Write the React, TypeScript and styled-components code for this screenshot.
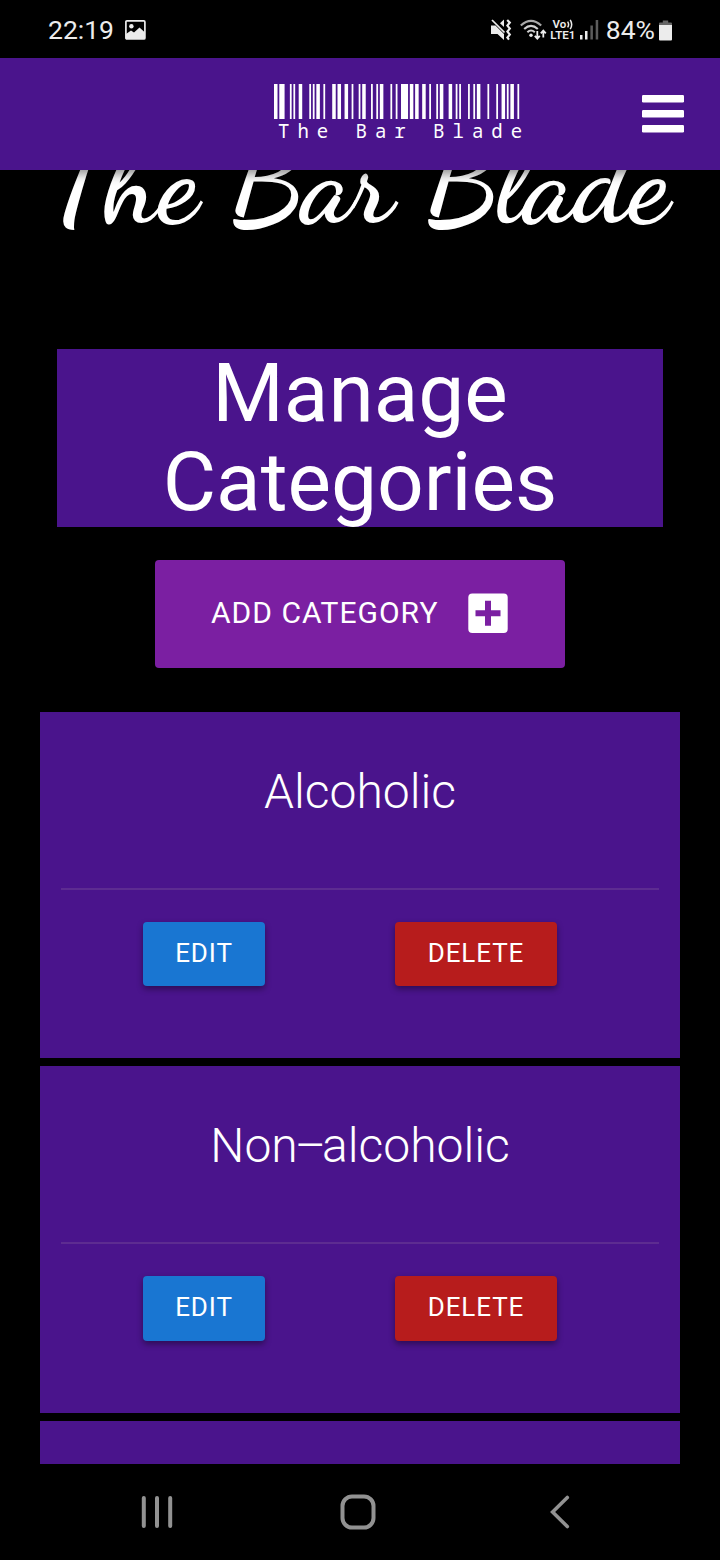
import React from 'react';
import styled, { createGlobalStyle } from 'styled-components';

const GlobalStyle = createGlobalStyle`
  *, *::before, *::after { box-sizing: border-box; }
  body { margin: 0; background: #000; font-family: Roboto, "Liberation Sans", sans-serif; }
  button { font-family: inherit; cursor: pointer; }
`;

const Screen = styled.div`
  width: 720px;
  height: 1560px;
  display: flex;
  flex-direction: column;
  overflow: hidden;
  background: #000;
  color: #fff;
`;

const StatusBar = styled.div`
  flex: none;
  height: 58px;
  padding: 2px 48px 0 48px;
  display: flex;
  align-items: center;
  justify-content: space-between;
  color: #ececec;
`;

const StatusGroup = styled.div<{ $gap: number }>`
  display: flex;
  align-items: center;
  gap: ${(p) => p.$gap}px;
  svg { display: block; flex: none; }
`;

const StatusText = styled.span`
  font-size: 26.5px;
  line-height: 32px;
`;

const LteLabel = styled.div`
  display: flex;
  flex-direction: column;
  align-items: center;
  width: 26px;
  margin-right: 1px;
  font-size: 11.5px;
  line-height: 11px;
  font-weight: 600;
  white-space: nowrap;
`;

const AppBar = styled.header`
  flex: none;
  position: relative;
  z-index: 1;
  height: 112px;
  padding: 0 36px 0 274px;
  display: flex;
  align-items: center;
  justify-content: space-between;
  background: #4a148c;
  box-shadow: 0 4px 10px rgba(0, 0, 0, 0.45);
`;

const Logo = styled.div`
  width: 253px;
  display: flex;
  flex-direction: column;
  padding-bottom: 2px;
  svg { display: block; }
`;

const LogoText = styled.div`
  display: grid;
  grid-template-columns: repeat(13, 19.4px);
  margin-top: 1px;
  font-family: "Noto Sans Mono", "Roboto Mono", "DejaVu Sans Mono", monospace;
  font-size: 19px;
  line-height: 22px;
  text-align: center;
`;

const MenuButton = styled.button`
  padding: 0;
  border: 0;
  background: none;
  svg { display: block; }
`;

const Page = styled.main`
  flex: 1;
  min-height: 0;
  overflow: hidden;
  display: flex;
  flex-direction: column;
  align-items: center;
`;

const Brand = styled.h1`
  flex: none;
  height: 179px;
  margin: 0 3px 0 0;
  font: 700 113px/100px "Dancing Script", "Liberation Serif", serif;
  word-spacing: 1px;
  white-space: nowrap;
`;

const BrandText = styled.span`
  display: block;
  margin-top: -36px;
`;

const PageTitle = styled.h2`
  flex: none;
  width: 606px;
  height: 178px;
  margin: 0 0 33px;
  padding: 0 90px;
  background: #4a148c;
  font-size: 82px;
  font-weight: 400;
  line-height: 89px;
  text-align: center;
`;

const AddButton = styled.button`
  flex: none;
  width: 410px;
  height: 108px;
  margin-bottom: 43.9px;
  padding: 0 57px 2px 56px;
  border: 0;
  border-radius: 4px;
  display: flex;
  align-items: center;
  justify-content: space-between;
  background: #7b1fa2;
  color: #fff;
  font-size: 30px;
  letter-spacing: 1px;
  white-space: nowrap;
  svg { display: block; }
`;

const AddLabel = styled.span`
  padding-bottom: 2px;
`;

const CardList = styled.div`
  width: 640px;
  display: flex;
  flex-direction: column;
  gap: 8px;
`;

const Card = styled.section`
  flex: none;
  height: 346.5px;
  padding: 0 21px;
  background: #4a148c;
`;

const CardTitle = styled.h3`
  height: 176px;
  margin: 0;
  padding-top: 48px;
  font-size: 48px;
  font-weight: 300;
  line-height: 64px;
  text-align: center;
`;

const Dash = styled.span`
  margin: 0 -4px 0 -3px;
`;

const Divider = styled.hr`
  height: 2px;
  margin: 0;
  border: 0;
  background: #5d2c91;
`;

const Actions = styled.div`
  display: flex;
  gap: 130px;
  padding: 32px 0 0 82px;
`;

const ActionButton = styled.button<{ $tone: 'primary' | 'danger' }>`
  width: ${(p) => (p.$tone === 'danger' ? 162 : 122)}px;
  height: 64.2px;
  padding: 0 0 2px;
  border: 0;
  border-radius: 4px;
  background: ${(p) => (p.$tone === 'danger' ? '#b71c1c' : '#1976d2')};
  color: #fff;
  font-size: 26px;
  letter-spacing: 0.9px;
  box-shadow: 0 3px 6px rgba(0, 0, 0, 0.4);
`;

const NavBar = styled.nav`
  flex: none;
  height: 96px;
  padding: 0 149px 0 141px;
  display: grid;
  grid-template-columns: 199px 210px 21px;
  align-items: center;
  background: #000;
  svg { display: block; }
`;

const NAME = 'The Bar Blade';

// Code 128 element widths (bar, space, bar, ...) per character
const CODE128: Record<string, string> = {
  ' ': '212222',
  B: '131123',
  T: '213311',
  a: '121124',
  d: '141221',
  e: '112214',
  h: '122411',
  l: '221114',
  r: '121241',
};

function barcode(text: string) {
  const bars: { x: number; w: number }[] = [];
  let x = 0;
  for (const ch of text) {
    [...CODE128[ch]].forEach((n, i) => {
      if (i % 2 === 0) bars.push({ x, w: Number(n) });
      x += Number(n);
    });
  }
  return bars;
}

const Barcode = () => (
  <svg width="252.25" height="35" viewBox="0 0 143 35" preserveAspectRatio="none" fill="#fff">
    {barcode(NAME).map((b) => (
      <rect key={b.x} x={b.x} y="0" width={b.w} height="35" />
    ))}
  </svg>
);

const PictureIcon = () => (
  <svg width="21" height="20" viewBox="0 0 21 20">
    <rect x="0.9" y="0.9" width="19" height="18" rx="1" fill="none" stroke="#ececec" strokeWidth="1.7" />
    <circle cx="6.4" cy="6.2" r="2.2" fill="#ececec" />
    <path d="M1 14l5-3.6 3 2.2 5.5-5 5.5 5V19H1z" fill="#ececec" />
  </svg>
);

const MuteIcon = () => (
  <svg width="21" height="22" viewBox="0 0 21 22" fill="none">
    <path d="M0 6.5h4.5L13 15v6L6.5 15H0z" fill="#ececec" />
    <path d="M9 4.2L13 .5v7.6z" fill="#ececec" />
    <path d="M1 1l12.5 12.5" stroke="#ececec" strokeWidth="1.7" />
    <path d="M16.2 1l2.6 2.6-2.4 3 2.4 3-2.4 3 2.4 3-2.4 3 1.6 2" stroke="#ececec" strokeWidth="2.2" />
  </svg>
);

const WifiIcon = () => (
  <svg width="27" height="22" viewBox="0 0 27 22" fill="none" stroke="#a8a8a8" strokeWidth="2.1">
    <path d="M.8 6.6Q11 -2.8 21.2 6.6" />
    <path d="M4.2 10Q11 3.8 17.8 10" stroke="#d0d0d0" />
    <path d="M7.4 13.2Q11 9.8 14.8 13.2" stroke="#d0d0d0" />
    <circle cx="11" cy="16.2" r="1.7" fill="#ececec" stroke="none" />
    <path d="M17.3 12v7M14.8 16.8l2.5 2.8 2.5-2.8M23.3 18.5v-6M20.8 14.3l2.5-2.8 2.5 2.8" stroke="#ececec" strokeWidth="1.8" />
  </svg>
);

const SignalIcon = () => (
  <svg width="19" height="20" viewBox="0 0 19 20">
    <rect x="0" y="15" width="2.5" height="4.5" fill="#ececec" />
    <rect x="5" y="11" width="2.5" height="8.5" fill="#ececec" />
    <rect x="10.4" y="5.5" width="2.5" height="14" fill="#5c5c5c" />
    <rect x="15.7" y="0" width="2.5" height="19.5" fill="#5c5c5c" />
  </svg>
);

const BatteryIcon = () => (
  <svg width="13" height="21" viewBox="0 0 13 21">
    <path d="M0 5V3.4q0-1 1-1h2.8V.5h5.4v1.9H12q1 0 1 1V5z" fill="#666" />
    <path d="M0 5h13v14.5q0 1-1 1H1q-1 0-1-1z" fill="#ececec" />
  </svg>
);

const VolteWaves = () => (
  <svg width="6" height="11" viewBox="0 0 6 11" fill="none" stroke="#ececec" strokeWidth="1.5">
    <path d="M.6 2.6q2 2.9 0 5.8M3.2 .8q3 4.7 0 9.4" />
  </svg>
);

const BarsIcon = () => (
  <svg width="42" height="38" viewBox="0 0 42 38" fill="#fff">
    <rect y="0" width="42" height="7.5" rx="1.3" />
    <rect y="15" width="42" height="7.5" rx="1.3" />
    <rect y="30" width="42" height="7.5" rx="1.3" />
  </svg>
);

const PlusSquareIcon = () => (
  <svg width="40" height="40" viewBox="0 0 40 40">
    <rect x="0.3" y="0.5" width="39.4" height="39.4" rx="4" fill="#fff" />
    <path d="M17 7.7h6v9.5h9.5v6H23v9.5h-6v-9.5H7.5v-6H17z" fill="#7b1fa2" />
  </svg>
);

const RecentsIcon = () => (
  <svg width="33" height="34" viewBox="0 0 33 34" stroke="#929292" strokeWidth="4" strokeLinecap="round">
    <path d="M2.8 3v28M16 3v28M29.2 3v28" />
  </svg>
);

const HomeIcon = () => (
  <svg width="36" height="36" viewBox="0 0 36 36" fill="none" stroke="#929292" strokeWidth="4">
    <rect x="2.5" y="2.5" width="31" height="31" rx="9.5" />
  </svg>
);

const BackIcon = () => (
  <svg width="21" height="34" viewBox="0 0 21 34" fill="none" stroke="#929292" strokeWidth="3.6" strokeLinecap="round">
    <path d="M17.3 2.5L2.6 17l14.7 14.5" />
  </svg>
);

const CategoryCard = ({ name }: { name: React.ReactNode }) => (
  <Card>
    <CardTitle>{name}</CardTitle>
    <Divider />
    <Actions>
      <ActionButton $tone="primary">EDIT</ActionButton>
      <ActionButton $tone="danger">DELETE</ActionButton>
    </Actions>
  </Card>
);

export default function App() {
  return (
    <>
      <GlobalStyle />
      <Screen>
        <StatusBar>
          <StatusGroup $gap={11}>
            <StatusText>22:19</StatusText>
            <PictureIcon />
          </StatusGroup>
          <StatusGroup $gap={3}>
            <StatusGroup $gap={8}>
              <MuteIcon />
              <WifiIcon />
            </StatusGroup>
            <LteLabel>
              <StatusGroup $gap={1}>
                Vo
                <VolteWaves />
              </StatusGroup>
              LTE1
            </LteLabel>
            <StatusGroup $gap={7}>
              <SignalIcon />
              <StatusGroup $gap={4}>
                <StatusText>84%</StatusText>
                <BatteryIcon />
              </StatusGroup>
            </StatusGroup>
          </StatusGroup>
        </StatusBar>

        <AppBar>
          <Logo>
            <Barcode />
            <LogoText>
              {[...NAME].map((ch, i) => (
                <span key={i}>{ch}</span>
              ))}
            </LogoText>
          </Logo>
          <MenuButton aria-label="Menu">
            <BarsIcon />
          </MenuButton>
        </AppBar>

        <Page>
          <Brand>
            <BrandText>The Bar Blade</BrandText>
          </Brand>
          <PageTitle>Manage Categories</PageTitle>
          <AddButton>
            <AddLabel>ADD CATEGORY</AddLabel>
            <PlusSquareIcon />
          </AddButton>
          <CardList>
            <CategoryCard name="Alcoholic" />
            <CategoryCard
              name={
                <>
                  Non<Dash>–</Dash>alcoholic
                </>
              }
            />
            <Card />
          </CardList>
        </Page>

        <NavBar>
          <RecentsIcon />
          <HomeIcon />
          <BackIcon />
        </NavBar>
      </Screen>
    </>
  );
}
